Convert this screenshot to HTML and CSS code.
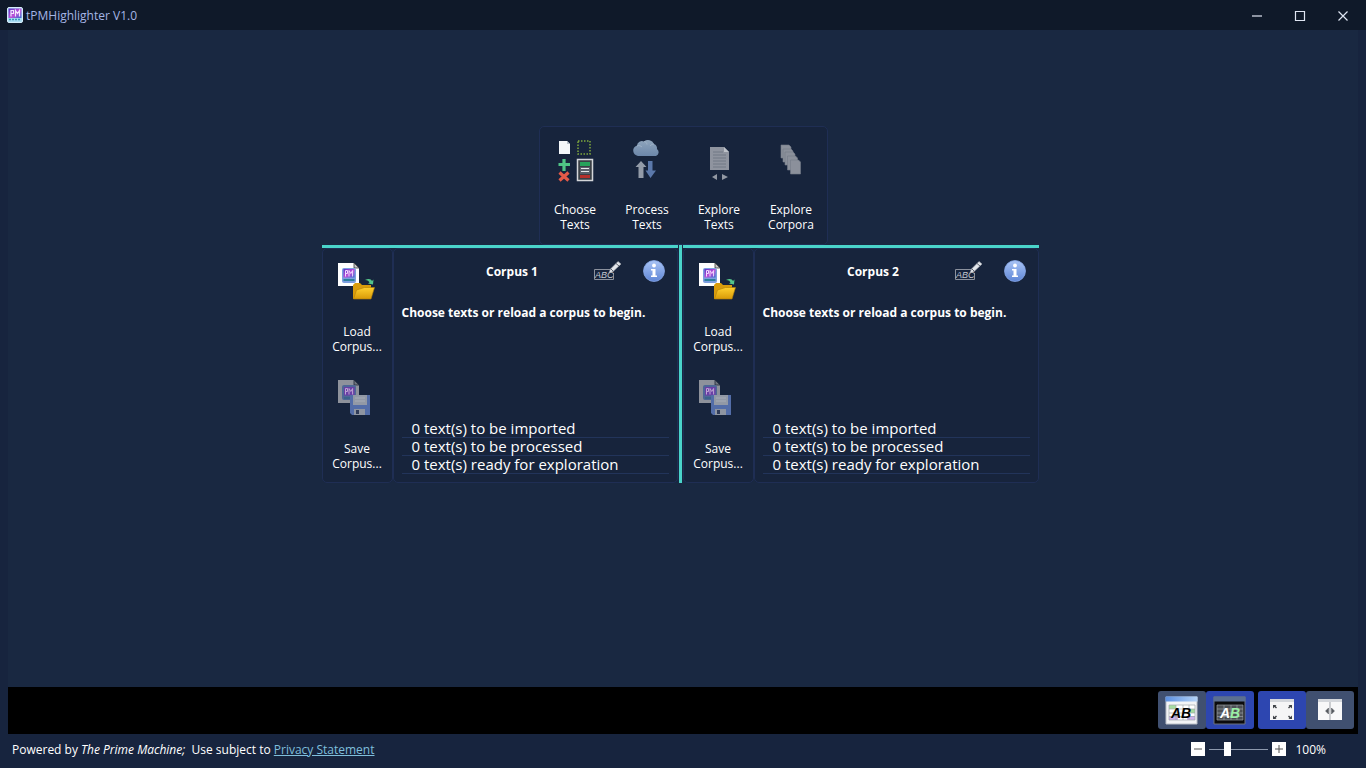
FILE: index.html
```html
<!DOCTYPE html>
<html lang="en">
<head>
  <meta charset="UTF-8" />
  <meta name="viewport" content="width=device-width, initial-scale=1.0"/>
  <title>tPMHighlighter V1.0</title>
  <link rel="stylesheet" href="styles.css">
</head>
<body>

  <!-- Shared icons -->
  <svg class="sprite" aria-hidden="true">
    <defs>
      <linearGradient id="pmFill" x1="0" y1="0" x2="1" y2="1">
        <stop offset="0" stop-color="#5a35c8"/>
        <stop offset="0.55" stop-color="#c050d8"/>
        <stop offset="1" stop-color="#3a6ad0"/>
      </linearGradient>
      <linearGradient id="folderFill" x1="0" y1="0" x2="0" y2="1">
        <stop offset="0" stop-color="#ffd02e"/>
        <stop offset="1" stop-color="#d89a08"/>
      </linearGradient>
      <linearGradient id="infoFill" x1="0" y1="0" x2="0" y2="1">
        <stop offset="0" stop-color="#a9c4f5"/>
        <stop offset="1" stop-color="#5f86d6"/>
      </linearGradient>
      <linearGradient id="cloudFill" x1="0" y1="0" x2="0" y2="1">
        <stop offset="0" stop-color="#8fa5bc"/>
        <stop offset="1" stop-color="#6c87aa"/>
      </linearGradient>
      <linearGradient id="barFill" x1="0" y1="0" x2="1" y2="0">
        <stop offset="0" stop-color="#5b8fe0"/>
        <stop offset="1" stop-color="#b5d4f8"/>
      </linearGradient>
    </defs>

    <symbol id="pm" viewBox="0 0 16 16">
      <rect x="0.5" y="0.5" width="15" height="15" rx="1.5" fill="#a9dcf2" stroke="#d5eefa"/>
      <rect x="1.500" y="1.500" width="13" height="9.500" fill="url(#pmFill)"/>
      <path d="M4 9.500V3.500h2.500v3H4M8.500 9.500v-6l2 3 2-3v6" fill="none" stroke="#f4e4ff" stroke-width="1.200"/>
      <path d="M2 12.500h12" stroke="#3b9bb8" stroke-width="1.500" stroke-dasharray="2 1"/>
    </symbol>

    <symbol id="load" viewBox="0 0 48 48">
      <path d="M5 5h16l5 5v18H5z" fill="#fff"/>
      <path d="M21 5v5h5z" fill="#c9c9c9" stroke="#3a3a3a" stroke-width="0.800"/>
      <rect x="9" y="10" width="14" height="15" rx="2" fill="#7d9fe0"/>
      <rect x="10.500" y="11" width="11" height="8.500" fill="url(#pmFill)"/>
      <path d="M12.500 18.500v-6h2v3h-2M16 18.500v-6l1.800 3 1.800-3v6" fill="none" stroke="#f0d8ff"/>
      <path d="M10.500 22h11" stroke="#2c7f9c" stroke-width="2"/>
      <path d="M20 41V27l2-2h5l2 2h9v4l-3 10z" fill="#d99c0c"/>
      <path d="M20.500 41l3-9 8-2.500h10l-3.500 11.500z" fill="url(#folderFill)" stroke="#b17d06" stroke-width="0.600"/>
      <path d="M32 22c4-2 6-1 7 1l1.500-1.500-.5 5-5-1 1.500-1c-1-1.500-1.500-2.500-4.500-2.500z" fill="#54c48a"/>
    </symbol>

    <symbol id="save" viewBox="0 0 48 48">
      <path d="M5 5h16l5 5v18H5z" fill="#8e929b"/>
      <path d="M21 5v5h5z" fill="#6f747e" stroke="#22293a" stroke-width="0.800"/>
      <rect x="9" y="10" width="14" height="15" rx="2" fill="#4e6797"/>
      <rect x="11" y="12" width="10.500" height="8.500" fill="#6a3fa6"/>
      <path d="M12.500 19.500v-6h2v3h-2M16 19.500v-6l1.800 3 1.800-3v6" fill="none" stroke="#bca3d2"/>
      <path d="M11 23h10" stroke="#2a6180"/>
      <path d="M17 20h20v20H19l-2-2z" fill="#536da8"/>
      <path d="M20 20h14v10H20z" fill="#9299a6"/>
      <path d="M22 23h10M22 26h10" stroke="#a7adb8"/>
      <path d="M21 34h11v6H21z" fill="#8f95a1"/>
      <path d="M23 35h3v4h-3z" fill="#2f3b58"/>
    </symbol>

    <symbol id="info" viewBox="0 0 22 22">
      <circle cx="11" cy="11" r="10.500" fill="url(#infoFill)" stroke="#86a6e6" stroke-width="0.800"/>
      <circle cx="11" cy="5.500" r="1.900" fill="#fff"/>
      <path d="M8 9h4.500v6.500H14V17H8v-1.500h1.500v-5H8z" fill="#fff"/>
    </symbol>
  </svg>

  <header class="titlebar">
    <svg class="app-icon"><use href="#pm"/></svg>
    <span class="app-name">tPMHighlighter V1.0</span>
    <div class="window-buttons">
      <button type="button" aria-label="Minimize"><svg viewBox="0 0 12 12"><path d="M1 6h10"/></svg></button>
      <button type="button" aria-label="Maximize"><svg viewBox="0 0 12 12"><path d="M1.500 1.500h9v9h-9z"/></svg></button>
      <button type="button" aria-label="Close"><svg viewBox="0 0 12 12"><path d="M1.500 1.500l9 9M10.500 1.500l-9 9"/></svg></button>
    </div>
  </header>

  <main class="workspace">

    <!-- Main steps -->
    <nav class="toolbar">
      <button class="tool" type="button">
        <svg viewBox="0 0 48 48">
          <path d="M8 5h8l3 3v10H8z" fill="#f4f7fa"/>
          <path d="M16 5v3h3z" fill="#b9c2cc"/>
          <path d="M27 5h12v13H27z" fill="none" stroke="#7fa83c" stroke-width="1.500" stroke-dasharray="1.500 1.500"/>
          <path d="M13 23v12M7.500 28.500h11.500" stroke="#4fc486" stroke-width="3.200"/>
          <path d="M8.500 36.500l9 8M17.500 36.500l-9 8" stroke="#e45a48" stroke-width="3.200"/>
          <path d="M26.500 23.500h15v21h-15z" fill="#3a3f45" stroke="#d4d6d9" stroke-width="1.500"/>
          <path d="M29 26h10v4H29z" fill="#27a35b"/>
          <path d="M29 31h10v7H29z" fill="#59606a"/>
          <path d="M30 32.500h8M30 35.500h8" stroke="#e6e8ea" stroke-width="1.200"/>
          <path d="M29 39h10v3H29z" fill="#b5302b"/>
        </svg>
        <span>Choose<br>Texts</span>
      </button>
      <button class="tool" type="button">
        <svg viewBox="0 0 48 48">
          <path d="M15 20a6 5.500 0 0 1-1-10.500 5 5 0 0 1 7-4 6.500 6.500 0 0 1 10 2.500 5 5 0 0 1 3 5 4 4 0 0 1-1 7z" fill="url(#cloudFill)"/>
          <path d="M14 10c2-1 4 0 5 1M21 5.500c2 0 3 2 3 3M31 8c-2 0-3 1-4 2" fill="none" stroke="#a5b6ca" stroke-width="0.800"/>
          <path d="M18 25l5.500 6h-3v11h-5V31h-3z" fill="#939ba8"/>
          <path d="M25 25h4.500v9.500H33L27.500 42 22.500 34.500H25z" fill="#5b78aa"/>
        </svg>
        <span>Process<br>Texts</span>
      </button>
      <button class="tool" type="button">
        <svg viewBox="0 0 48 48">
          <path d="M15 11h14l5 5v18H15z" fill="#8f949f"/>
          <path d="M29 11v5h5z" fill="#bdc1c8"/>
          <path d="M18 16h10M18 19h13M18 22h13M18 25h13M18 28h13M18 31h13" stroke="#717885"/>
          <path d="M22 38v6l-5-3zM27 38v6l6-3z" fill="#9298a3"/>
        </svg>
        <span>Explore<br>Texts</span>
      </button>
      <button class="tool" type="button">
        <svg viewBox="0 0 48 48">
          <g fill="#8b909b" stroke="#737a88" stroke-width="0.600">
            <path d="M14 9h8l2 2v11H14z"/>
            <path d="M16 13h8l2 2v11H16z"/>
            <path d="M18 16h8l2 2v11H18z"/>
            <path d="M20.500 20h8l2 2v12h-10z"/>
            <path d="M23.500 24h8l2 2v12h-10z"/>
          </g>
        </svg>
        <span>Explore<br>Corpora</span>
      </button>
    </nav>

    <!-- Corpora -->
    <div class="corpora">
      <section class="corpus">
        <div class="corpus-files">
          <button class="tool" type="button"><svg><use href="#load"/></svg><span>Load<br>Corpus...</span></button>
          <button class="tool" type="button"><svg><use href="#save"/></svg><span>Save<br>Corpus...</span></button>
        </div>
        <div class="corpus-info">
          <div class="corpus-head">
            <h2>Corpus 1</h2>
            <button class="rename" type="button" aria-label="Rename corpus">
              <svg viewBox="0 0 30 22">
                <path d="M17 9.500H1.500v10h19V13" fill="none" stroke="#8b919d"/>
                <text class="abc" x="2" y="18">ABC</text>
                <path d="M16 13l1.500-4L25 1.500 28 4 20 11.500z" fill="#e4e7ec" stroke="#a4a8b0" stroke-width="0.600"/>
                <path d="M18 9l2 2M23 3.500l3 2.500" stroke="#5c626e"/>
              </svg>
            </button>
            <button class="info" type="button" aria-label="Corpus information"><svg><use href="#info"/></svg></button>
          </div>
          <p class="message">Choose texts or reload a corpus to begin.</p>
          <ul class="counts">
            <li>0 text(s) to be imported</li>
            <li>0 text(s) to be processed</li>
            <li>0 text(s) ready for exploration</li>
          </ul>
        </div>
      </section>

      <div class="divider"></div>

      <section class="corpus">
        <div class="corpus-files">
          <button class="tool" type="button"><svg><use href="#load"/></svg><span>Load<br>Corpus...</span></button>
          <button class="tool" type="button"><svg><use href="#save"/></svg><span>Save<br>Corpus...</span></button>
        </div>
        <div class="corpus-info">
          <div class="corpus-head">
            <h2>Corpus 2</h2>
            <button class="rename" type="button" aria-label="Rename corpus">
              <svg viewBox="0 0 30 22">
                <path d="M17 9.500H1.500v10h19V13" fill="none" stroke="#8b919d"/>
                <text class="abc" x="2" y="18">ABC</text>
                <path d="M16 13l1.500-4L25 1.500 28 4 20 11.500z" fill="#e4e7ec" stroke="#a4a8b0" stroke-width="0.600"/>
                <path d="M18 9l2 2M23 3.500l3 2.500" stroke="#5c626e"/>
              </svg>
            </button>
            <button class="info" type="button" aria-label="Corpus information"><svg><use href="#info"/></svg></button>
          </div>
          <p class="message">Choose texts or reload a corpus to begin.</p>
          <ul class="counts">
            <li>0 text(s) to be imported</li>
            <li>0 text(s) to be processed</li>
            <li>0 text(s) ready for exploration</li>
          </ul>
        </div>
      </section>
    </div>
  </main>

  <!-- Display options -->
  <div class="viewbar">
    <div class="switch">
      <button type="button" aria-label="Light theme">
        <svg viewBox="0 0 48 38">
          <path d="M8 6h31v27H8z" fill="#f3f4f6" stroke="#b9bec6"/>
          <path d="M7.500 5.500h32v5h-32z" fill="url(#barFill)"/>
          <path d="M11 14h26v15H11z" fill="#fff"/>
          <path d="M11 14h7v4h-7zM31 18h6v4h-6z" fill="#a6dca0"/>
          <path d="M11 25h9v4h-9zM29 25h8v4h-8z" fill="#cdb2ea"/>
          <path d="M11 14h26v15H11zM11 18h26M11 22h26M11 25.500h26M18 14v15M25 14v15M31 14v15" fill="none" stroke="#a2a6ad" stroke-width="0.700"/>
          <text class="ab" x="23" y="27" fill="#000">AB</text>
        </svg>
      </button>
      <button class="selected" type="button" aria-label="Dark theme">
        <svg viewBox="0 0 48 38">
          <path d="M8 6h31v27H8z" fill="#0b0b0c" stroke="#6d737c"/>
          <path d="M7.500 5.500h32v5h-32z" fill="#5b6f91"/>
          <path d="M11 14h26v15H11z" fill="#4c4f54"/>
          <path d="M11 14h26v15H11zM11 18h26M11 22h26M11 25.500h26M18 14v15M25 14v15M31 14v15" fill="none" stroke="#999da3" stroke-width="0.700"/>
          <text class="ab" x="24" y="27" fill="#fff">A<tspan fill="#9af0a5">B</tspan></text>
        </svg>
      </button>
    </div>
    <div class="switch">
      <button class="selected" type="button" aria-label="Full window">
        <svg viewBox="0 0 48 38">
          <path d="M12 8h24v21H12z" fill="#f5f5f6"/>
          <path d="M12 8h24v3H12z" fill="#d4d7dc"/>
          <path d="M15 14h3.500l-1 1 1.500 1.500-1 1-1.500-1.500-1.500 1.500zM34 14h-3.500l1 1-1.500 1.500 1 1 1.500-1.500 1.500 1.500zM15 28h3.500l-1-1 1.500-1.500-1-1-1.500 1.500-1.500-1.500zM34 28h-3.500l1-1-1.500-1.500 1-1 1.500 1.500 1.500-1.500z" fill="#3f4247"/>
        </svg>
      </button>
      <button type="button" aria-label="Split window">
        <svg viewBox="0 0 48 38">
          <path d="M12 8h24v21H12z" fill="#f8f8f9"/>
          <path d="M12 8h24v3H12z" fill="#d4d7dc"/>
          <path d="M24 11v18" stroke="#9da1a8"/>
          <path d="M22.500 17v6l-3-3zM25.500 17v6l3-3z" fill="#55595f" stroke="#55595f" stroke-width="0.500"/>
        </svg>
      </button>
    </div>
  </div>

  <footer class="statusbar">
    <p>Powered by <em>The Prime Machine;</em>&nbsp; Use subject to <a href="#">Privacy Statement</a></p>
    <div class="zoom">
      <button type="button" aria-label="Zoom out"><svg viewBox="0 0 14 14"><path d="M3 7h8"/></svg></button>
      <input type="range" id="zoom" min="50" max="225" value="100" />
      <button type="button" aria-label="Zoom in"><svg viewBox="0 0 14 14"><path d="M3 7h8M7 3v8"/></svg></button>
      <label for="zoom">100%</label>
    </div>
  </footer>

</body>
</html>
```
FILE: styles.css
```css
* {
  box-sizing: border-box;
}

body {
  font-family: 'Open Sans', 'Noto Sans', sans-serif;
  font-size: 12px;
  line-height: 15px;
  margin: 0;
  min-height: 100vh;
  display: flex;
  flex-direction: column;
  color: #fff;
  background-color: #17243e;
}

button {
  padding: 0;
  border: none;
  background: none;
  color: inherit;
  font: inherit;
  cursor: pointer;
}

svg {
  display: block;
}

.sprite {
  position: absolute;
  width: 0;
  height: 0;
}

/* Title bar */
.titlebar {
  display: flex;
  align-items: center;
  height: 30px;
  padding: 0 2px 0 7px;
  background-color: #0f1929;
}

.app-icon {
  width: 16px;
  height: 16px;
  margin-right: 3px;
}

.app-name {
  color: #a5b5e5;
}

.window-buttons {
  display: flex;
  margin-left: auto;
}

.window-buttons button {
  width: 43px;
  height: 30px;
  padding-top: 2px;
}

.window-buttons svg {
  width: 12px;
  height: 12px;
  margin: auto;
  fill: none;
  stroke: #dfe5f2;
  stroke-width: 1.2px;
}

/* Workspace */
.workspace {
  flex: 1;
  display: flex;
  flex-direction: column;
  align-items: center;
  margin: 0 8px;
  padding-top: 96px;
  background-color: #192841;
}

.toolbar {
  display: flex;
  gap: 1px;
  padding: 9px 0 12px;
  border: 1px solid #1f2e54;
  border-radius: 5px;
  background-color: #17243c;
}

.tool {
  width: 71px;
  text-align: center;
}

.tool svg {
  width: 48px;
  height: 48px;
  margin: 0 auto 18px;
}

.tool span {
  display: block;
}

.corpora {
  display: flex;
  gap: 1px;
  padding-right: 6px;
}

.divider {
  width: 3px;
  background-color: #4ad4ca;
}

.corpus {
  display: flex;
  border-top: 3px solid #4ad4ca;
}

.corpus-files,
.corpus-info {
  border: 1px solid #1f2e54;
  border-radius: 5px;
  background-color: #17243c;
}

.corpus-files {
  display: flex;
  flex-direction: column;
  gap: 21px;
  width: 71px;
  padding: 9px 0 11px;
}

.corpus-files .tool {
  width: auto;
}

.corpus-info {
  display: flex;
  flex-direction: column;
  width: 285px;
  padding: 11px 8px 8px;
}

.corpus-head {
  display: flex;
  align-items: center;
  padding-right: 4px;
}

.corpus-head h2 {
  flex: 1;
  margin: 0;
  padding-left: 30px;
  font-size: 12px;
  text-align: center;
}

.rename svg {
  width: 30px;
  height: 22px;
}

.info {
  margin-left: 20px;
}

.info svg {
  width: 22px;
  height: 22px;
}

.abc {
  font: italic 9px 'Liberation Sans', sans-serif;
  fill: #c3c7ce;
}

.message {
  margin: 23px 0 0;
  font-weight: bold;
  white-space: nowrap;
}

.counts {
  margin: auto 0 0;
  padding: 0;
  list-style: none;
  font-size: 15px;
}

.counts li {
  height: 18px;
  padding-left: 10px;
  line-height: 17px;
  border-bottom: 1px solid #22345a;
}

/* Display options */
.viewbar {
  display: flex;
  justify-content: flex-end;
  gap: 4px;
  margin: 0 8px;
  padding: 4px 4px 5px;
  background-color: #000;
}

.switch {
  display: flex;
}

.switch button {
  border-radius: 3px;
  background-color: #405070;
}

.switch .selected {
  background-color: #2d46b0;
}

.switch svg {
  width: 48px;
  height: 38px;
}

.ab {
  font: italic bold 14px 'Liberation Sans', sans-serif;
  text-anchor: middle;
}

/* Status bar */
.statusbar {
  display: flex;
  align-items: center;
  justify-content: space-between;
  height: 34px;
  padding: 0 40px 4px 12px;
}

.statusbar p {
  margin: 0;
}

.statusbar a {
  color: #7fbfdc;
}

.zoom {
  display: flex;
  align-items: center;
  gap: 4px;
}

.zoom button {
  background-color: #fff;
}

.zoom button svg {
  width: 14px;
  height: 14px;
  stroke: #555;
}

.zoom label {
  margin-left: 5px;
}

.zoom input {
  appearance: none;
  width: 59px;
  height: 14px;
  margin: 0;
  background: linear-gradient(#8d99ad, #8d99ad) center / 100% 1px no-repeat;
}

.zoom input::-webkit-slider-thumb {
  appearance: none;
  width: 7px;
  height: 14px;
  background-color: #fff;
}
```
